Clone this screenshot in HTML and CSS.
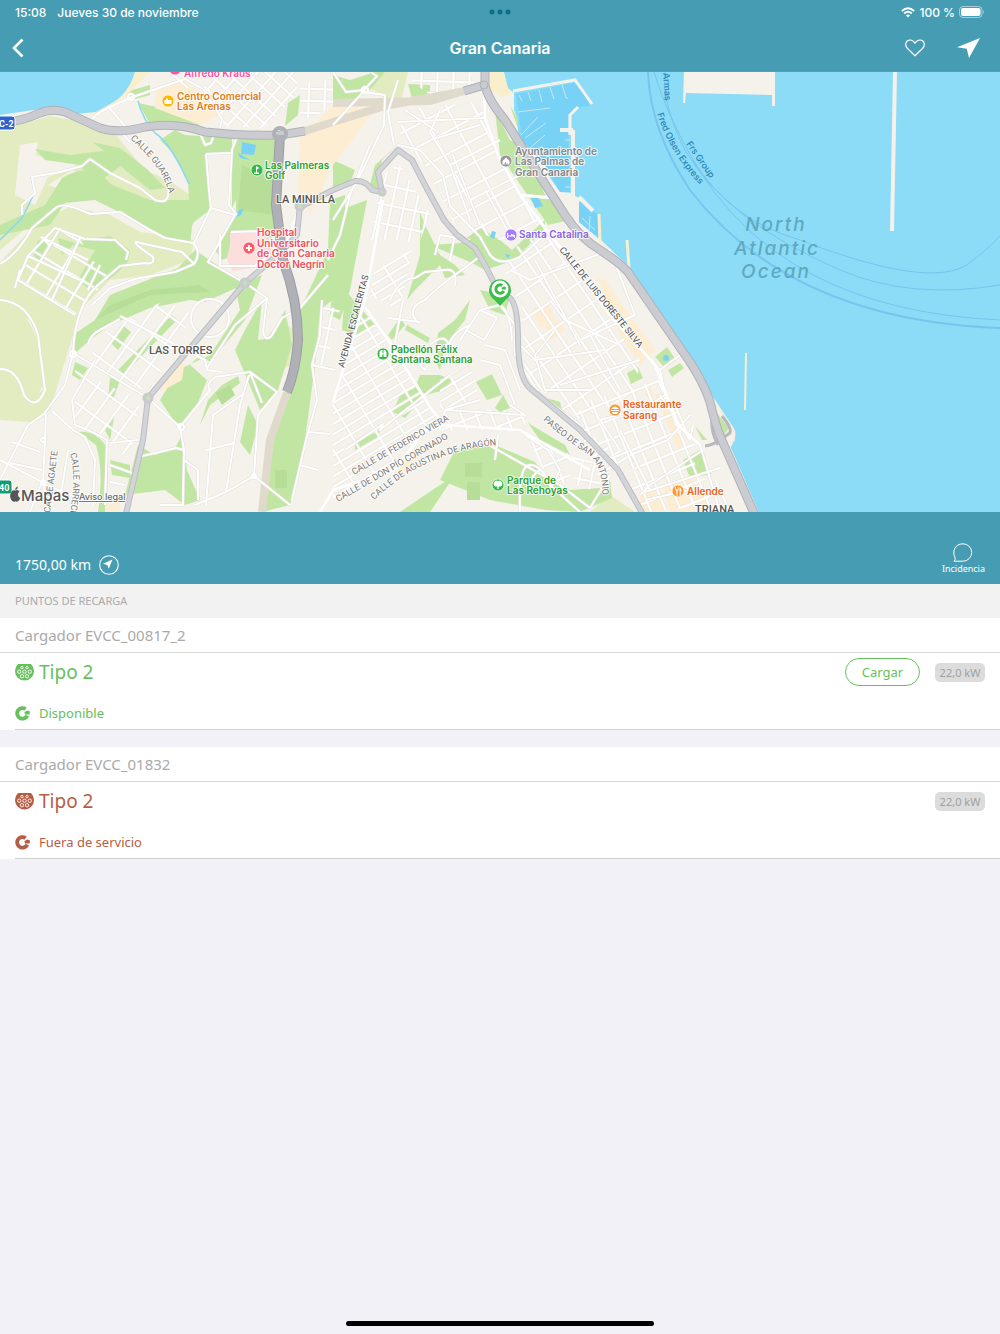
FILE: index.html
```html
<!DOCTYPE html>
<html lang="es">
<head>
<meta charset="utf-8">
<meta name="viewport" content="width=device-width, initial-scale=1">
<title>Gran Canaria</title>
<link rel="stylesheet" href="styles.css">
</head>
<body>
<svg class="sprite" aria-hidden="true">
  <symbol id="type2" viewBox="0 0 19 17">
    <path fill="currentColor" d="M3 0H16Q19 3 19 7A9.500 9.500 0 0 1 0 7Q0 3 3 0Z"/>
    <g fill="none" stroke="#fff" stroke-width=".9"><circle cx="7" cy="3.600" r="1.200"/><circle cx="12" cy="3.600" r="1.200"/><circle cx="4.200" cy="7.700" r="1.700"/><circle cx="9.500" cy="7.700" r="1.700"/><circle cx="14.800" cy="7.700" r="1.700"/><circle cx="7" cy="12.200" r="1.700"/><circle cx="12" cy="12.200" r="1.700"/></g>
  </symbol>
  <symbol id="plug" viewBox="0 0 15 15">
    <path fill="none" stroke="currentColor" stroke-width="3.800" d="M10.600 3.100A5.300 5.300 0 1 0 12.300 9.600"/>
    <path fill="currentColor" d="M9.400 6L12.600 4.600L14.800 5.200V8.400H10Z"/>
  </symbol>
</svg>

<header class="topbar">
  <div class="status">
    <div class="status-left"><span>15:08</span><span>Jueves 30 de noviembre</span></div>
    <svg class="dots" width="22" height="6" viewBox="0 0 22 6" aria-hidden="true"><circle cx="3" cy="3" r="2.500"/><circle cx="11" cy="3" r="2.500"/><circle cx="19" cy="3" r="2.500"/></svg>
    <div class="status-right">
      <svg width="14" height="11" viewBox="0 0 14 11" aria-hidden="true"><g fill="none" stroke="#fff" stroke-width="1.800"><path d="M.8 4Q7-1.600 13.200 4"/><path d="M3.200 6.500Q7 3.100 10.800 6.500"/></g><path fill="#fff" d="M7 10.500L4.900 8.300Q7 6.600 9.100 8.300Z"/></svg>
      <span>100 %</span>
      <svg width="26" height="12" viewBox="0 0 26 12" aria-hidden="true"><rect x=".5" y=".5" width="22.500" height="11" rx="3.500" fill="none" stroke="#fff" opacity=".5"/><rect x="2" y="2" width="19.500" height="8" rx="2" fill="#fff"/><path d="M24.300 4Q26 6 24.300 8Z" fill="#fff" opacity=".6"/></svg>
    </div>
  </div>
  <nav class="nav">
    <button class="icon-btn nav-back" aria-label="Atrás"><svg width="12" height="20" viewBox="0 0 12 20"><path d="M10.500 1.500L2 10L10.500 18.500" fill="none" stroke="#fff" stroke-width="2.600"/></svg></button>
    <h1>Gran Canaria</h1>
    <div class="nav-actions">
      <button class="icon-btn" aria-label="Favorito"><svg width="20" height="18" viewBox="0 0 20 18"><path d="M10 16.800L2.500 9.500C-.8 6 .8 1 5 1Q8.200 1 10 4.200Q11.800 1 15 1C19.200 1 20.800 6 17.500 9.500Z" fill="none" stroke="#fff" stroke-width="1.200" stroke-linejoin="round"/></svg></button>
      <button class="icon-btn" aria-label="Cómo llegar"><svg width="23" height="20" viewBox="0 0 23 20"><path d="M23 0L12 20L9.800 10.800L0 9.200Z" fill="#fff"/></svg></button>
    </div>
  </nav>
</header>

<main>
<svg class="map" viewBox="0 72 1000 440" role="img" aria-label="Mapa de Las Palmas de Gran Canaria">
  <defs>
    <pattern id="gNorth" width="13" height="13" patternUnits="userSpaceOnUse" patternTransform="rotate(42)"><path class="pc" d="M0 6H13M6 0V13"/><path class="pw" d="M0 6H13M6 0V13"/></pattern>
    <pattern id="gSquare" width="16" height="12" patternUnits="userSpaceOnUse" patternTransform="rotate(2)"><path class="pc" d="M0 6H16M8 0V12"/><path class="pw" d="M0 6H16M8 0V12"/></pattern>
    <pattern id="gMid" width="24" height="20" patternUnits="userSpaceOnUse" patternTransform="rotate(-28)"><path class="pc" d="M0 6H24M8 0V20"/><path class="pw" d="M0 6H24M8 0V20"/></pattern>
    <pattern id="gSlant" width="23" height="9" patternUnits="userSpaceOnUse" patternTransform="rotate(-31)"><path class="pc" d="M0 4H23M8 0V9"/><path class="pw" d="M0 4H23M8 0V9"/></pattern>
    <pattern id="gEast" width="15" height="24" patternUnits="userSpaceOnUse" patternTransform="rotate(-34)"><path class="pc" d="M0 6H15M6 0V24"/><path class="pw" d="M0 6H15M6 0V24"/></pattern>
    <pattern id="gTriana" width="14" height="18" patternUnits="userSpaceOnUse" patternTransform="rotate(-22)"><path class="pc" d="M0 6H14M6 0V18"/><path class="pw" d="M0 6H14M6 0V18"/></pattern>
    <pattern id="gWest" width="23" height="16" patternUnits="userSpaceOnUse" patternTransform="rotate(31)"><path class="pc" d="M0 6H23M8 0V16"/><path class="pw" d="M0 6H23M8 0V16"/></pattern>
    <pattern id="gTorres" width="15" height="25" patternUnits="userSpaceOnUse" patternTransform="rotate(36)"><path class="pc" d="M0 6H15M6 0V25"/><path class="pw" d="M0 6H15M6 0V25"/></pattern>
    <pattern id="gSteep" width="12" height="19" patternUnits="userSpaceOnUse" patternTransform="rotate(12)"><path class="pc" d="M0 6H12M6 0V19"/><path class="pw" d="M0 6H12M6 0V19"/></pattern>
    <g id="streets">
      <path d="M92 119Q97 113 110 107L130 98L185 79L203 89L222 119L220 128M108 106L128 130M120 131L130 142M200 133L205 145L211 143L215 132M170 72L188 88M238 134L232 150L229 205L237 215M206 154L232 153M206 154L209 190L211 208L194 243"/>
      <path d="M22 215L22 205L35 193L32 177L60 172L82 166L90 159L110 173L140 188L155 200Q166 204 168 196L169 187"/>
      <path d="M0 264Q18 254 32 228L57 207Q65 202 90 214L120 212L150 230L165 238L193 243Q202 252 194 264L182 252L140 243Q132 240 138 246L153 257Q155 265 145 263L120 266L98 285Q75 305 73 353"/>
      <path d="M194 264L175 272L135 279L110 288L92 305"/>
      <path d="M211 208L235 215L208 262L245 283L267 298L263 332Q266 343 272 335L282 318L300 308L328 275M220 235V266H255L270 255M231 232L268 231"/>
      <path d="M18 280L28 256L55 228L85 239L115 240L128 252L126 260M18 280L75 315M28 256L80 280M43 238L88 260M20 270L15 288M43 238L50 246M60 228L40 262M80 238L52 300M100 265L88 290"/>
      <path d="M0 300Q28 302 38 335L45 390Q36 412 24 395Q17 368 0 369M73 353L65 385L44 414L28 425L10 460L0 480M46 414L45 440L43 484L48 505M52 411L73 430L85 437L95 460L93 505M0 460L42 482L30 512M12 442L40 452M10 463L42 470M43 484L72 495M68 450L60 500"/>
      <path d="M73 353L148 398L180 427L210 390Q205 385 215 377L250 372L277 392L258 415L254 476L290 505M180 427L184 450L183 505L160 505M249 375L240 405L226 492L195 505M243 394L213 415L206 505M234 443L206 450M226 492L254 476M250 372L262 403M138 457L176 448L184 450M184 460L198 470L198 500"/>
      <path d="M88 345Q90 335 100 330L120 319M120 316L205 360L207 370L222 372M207 368L235 325L267 298M95 360L72 400L75 425Q90 430 107 440L105 505M110 443L138 440M110 465L132 473M110 482L125 485"/>
      <path class="wide" d="M383 200L365 300L333 402M300 205L288 240"/>
      <path d="M328 260L340 235L350 195L370 145M322 300L320 335L312 365L317 400L306 440L292 500M312 365L335 370M308 432L330 434M300 465L318 470M333 72L346 92L364 90L377 76L372 73M364 92L385 95L384 125L358 180L333 220M365 90L333 125M398 80L388 112L394 145"/>
      <path class="wide" d="M484 88L485 118L498 155L520 195L545 228L574 265L610 315L655 365L678 425L700 445M520 195L553 198"/>
      <path d="M398 145L420 150L443 175L450 206L480 237L490 255Q500 267 520 257L550 230M440 110L430 132L450 165L470 220M405 110L435 130M398 122L485 118M430 140L480 125M450 165L500 140M470 200L520 175M453 155L480 225"/>
      <path class="wide" d="M365 307L390 343L432 410L445 425M320 512L333 490L395 470L425 430L445 425L520 430L590 470"/>
      <path d="M345 450L383 424L380 430L450 375M418 323Q405 308 425 300Q440 285 455 275L478 258M430 345Q447 330 450 350M450 350Q447 335 470 325L480 310L500 305Q510 310 512 340M460 340L480 310L497 318L484 340L466 330M500 305L515 325L515 355L540 395L580 425M485 345L505 350L520 390M480 360L500 365L515 405"/>
      <path d="M400 345L425 370L440 345M390 300Q400 278 415 278L425 272L445 270Q458 268 455 285M388 318L420 322M403 300L395 343M435 255L440 235L470 240M455 235L450 260M485 190L510 235"/>
      <path d="M480 440L560 485L590 508L610 475M498 435L495 460M525 435L548 450L560 470L550 490M520 512Q518 465 530 465T550 485L580 512M530 490Q530 475 540 470M445 410L525 415M440 430L445 410L480 400M510 405L525 415"/>
      <path d="M555 330L535 355L545 390L590 390M550 300L565 320L620 345M535 260L580 345M510 270L530 280L610 250L635 315L580 340M520 345L535 360L605 350M590 335L620 390M560 385L640 360"/>
      <path d="M650 358L660 370L665 395L645 408L600 420L620 450M660 370L680 355M660 395L690 440L693 425M703 450L650 485L640 495M690 415L668 440L630 455M620 430L650 490M675 405L690 440M700 445L720 512M645 492L720 468M645 500L690 490M715 480L730 512"/>
      <circle cx="210" cy="318" r="19"/><circle cx="73" cy="354" r="3"/><circle cx="181" cy="427" r="3"/><circle cx="131" cy="97" r="3"/><circle cx="365" cy="90" r="3"/><circle cx="43" cy="440" r="2"/><circle cx="43" cy="482" r="2"/><circle cx="254" cy="476" r="2"/>
    </g>
    <g id="mains">
      <path d="M245 283L148 398L143 440L125 518M245 283L274 258M300 205L297 235L283 250M300 207L333 190L355 181Q366 180 372 190L382 192M382 192L378 172L398 150L412 160L425 185L444 220L457 235L475 248L485 265L495 285L510 298Q518 305 518 340Q518 380 532 390L580 430L618 470L645 518"/>
    </g>
    <g id="highway">
      <path d="M-4 124Q20 122 40 113Q52 108 65 112L100 128Q118 134 145 127Q175 122 205 132Q240 136 280 135L305 131"/>
      <path d="M485 66V85L464 91M485 85Q488 100 505 120L545 184L565 215Q580 238 600 250Q620 263 628 272L690 362Q708 390 712 410Q717 430 724 445L757 520"/>
    </g>
    <path id="guarelaPath" d="M130 139Q165 168 170 198"/>
    <path id="antonioPath" d="M543 420Q566 440 586 453Q605 464 602 506"/>
    <path id="arrecifePath" d="M70 454Q78 478 67 528"/>
    <path id="aragonPath" d="M374 500Q430 446 514 444"/>
    <path id="fredPath" d="M657 114Q674 164 716 200"/>
  </defs>

  <rect class="land" y="72" width="1000" height="440"/>

  <!-- hillsides -->
  <g class="olive">
    <path d="M0 130L50 116L95 124L115 134L145 170L168 180L190 195L194 225L170 215L130 208L100 200L60 200L30 225L0 250Z"/>
    <path d="M0 262L40 220L70 207L110 215L140 232L195 240L190 260L150 275L110 280L80 310L70 345L50 410L30 422L0 420ZM0 312L30 320L40 345L43 390L30 400L15 370L0 365Z" fill-rule="evenodd"/>
    <path d="M0 308L28 320L38 340L43 385L32 405L20 385L10 372L0 368Z"/>
    <path d="M372 72H408L400 105L385 98L370 88ZM245 360L265 340L280 320L295 330L290 365L275 375L248 370ZM610 495L635 512H590Z"/>
  </g>
  <path class="land" d="M20 145L38 142L36 155L60 160L85 157L70 170L48 177L35 205L15 195ZM48 185L72 170L110 185L125 200L80 196ZM62 107L92 122L118 130L110 104L95 112Z"/>
  <path class="land" d="M110 107L138 101L155 133L178 150L189 184L168 178L148 150L122 131Z"/>
  <g class="green">
    <path d="M185 135L232 138V152L206 154L210 210L190 225L188 180L172 152L160 140L175 130ZM138 103L180 112L200 122L198 128L150 124Z"/>
    <path d="M236 138H275L276 235L235 255L222 260L215 250L236 212ZM240 134L236 200L232 208V150Z"/>
    <path d="M125 92L150 85L150 95L135 99ZM288 103L300 95L298 115L285 126ZM92 142L120 148L148 170L165 188L150 190L125 170L110 155ZM35 149L70 155L110 150L122 165L95 185L80 165L45 160Z"/>
    <path d="M62 178Q90 160 112 185L150 200L195 200L190 245L160 235L125 215L95 200L65 203L50 225L0 235V225L45 205Z"/>
    <path d="M85 240L110 236L130 250L128 262L115 275L90 290L78 280L95 250L72 245ZM38 240L50 243L40 262L34 255ZM58 238L75 243L62 255Z"/>
    <path d="M195 250L245 284L205 302L190 300L150 308L110 325L90 340L73 355V335L95 320L110 295L135 285L178 268Z"/>
    <path d="M262 275L245 320L210 362L200 355L190 365L207 380L195 410L180 430L160 400L178 370L210 355L240 310L235 285ZM283 262L300 310L328 250L330 200L345 195V290L320 310L315 365L305 440L290 505L262 512L275 430L300 340ZM245 330L262 300L258 340L270 338L285 310L292 345L278 390L260 410L235 350Z"/>
    <path d="M182 435L187 470L200 500L185 505L165 490L125 495L138 445L155 455L175 448ZM78 432Q98 430 108 450L107 512H98Q104 470 96 445ZM105 430L115 412L110 440ZM110 460L130 465L130 478L112 475Z"/>
    <path d="M122 325L131 332L118 350L110 342ZM172 315L177 320L123 375L118 370ZM75 362L88 368L80 380L72 375ZM110 378L120 380L113 400L108 398ZM222 385L238 376L240 383L210 405L200 425L208 400ZM248 405L258 425L250 455L240 442Z"/>
    <path d="M333 75L350 80L375 72H385L370 90L333 115ZM408 84L430 85V100L412 98ZM333 160L355 170L350 183L333 188ZM398 145L382 160L378 190L370 185L375 165ZM495 110L510 140L525 145L545 195L570 220L548 225L500 155Z"/>
    <path d="M340 210L367 200L350 290L340 320L330 315ZM345 290L375 325L355 335L342 330ZM420 212L425 225L440 255L455 265L465 275L445 278L440 265L415 290L407 300L420 255ZM430 245L460 243L480 228L500 240L512 250L545 220L545 228L515 260L485 270L470 262ZM400 318L405 325L392 340L388 335ZM407 325L430 338L428 343L405 330ZM440 375L452 380L445 390L425 395L405 418L393 412L400 395L415 388L420 375ZM480 290L510 296L505 315L490 310ZM470 300L465 320L445 345L440 370L435 360L438 333L455 320Z"/>
    <path d="M476 382L492 374L502 395L487 400ZM355 442L380 430L378 437L355 450ZM495 408L503 395L510 408L500 412ZM528 423L565 445L570 455L540 440ZM543 397L560 402L563 415ZM455 450L495 445L535 462L545 475L570 490L600 488L605 495L610 480L612 498L580 512L545 510L490 500L440 480ZM455 475L430 512H400L425 495ZM510 105L530 140L525 150Z"/>
    <path d="M655 357L667 347L676 360L665 368ZM627 373L638 367L643 378L631 384ZM668 370L680 363L684 368L672 377ZM683 460L700 450L711 474L690 478ZM695 426L707 440L702 440Z"/>
  </g>
  <g class="green-dark">
    <path d="M242 165L275 180V215L238 210ZM95 320L150 295L210 292L200 285L150 290L110 305ZM215 393L230 385L235 395L222 405ZM465 463H482V477H465ZM467 482H480V500H467ZM275 470H287V488H275Z"/>
  </g>
  <g class="shops">
    <path d="M155 90L185 80L220 115L200 125L155 108ZM300 138L333 105L375 110L333 165L310 215L298 190ZM165 373L185 360L182 380L160 392ZM533 308L548 303L555 320L540 328ZM545 325L560 320L565 330L550 340ZM597 278L605 280L655 350L640 365L620 335ZM655 395L665 392L685 440L678 450ZM645 395L650 385L655 400ZM663 488L690 475L715 512H670ZM640 495L660 488L665 512H640ZM400 465L415 455L415 463L400 475ZM105 500H120V512H105Z"/>
  </g>
  <path class="hospital" d="M230 232H268L274 265L232 271L227 258L230 245Z"/>

  <!-- city blocks -->
  <path fill="url(#gNorth)" d="M200 72H300L294 98L262 128L225 126L205 90Z"/>
  <path fill="url(#gSquare)" d="M300 85L333 78V105L312 118H300ZM412 72H470L475 85L435 98L412 82Z"/>
  <path fill="url(#gMid)" d="M403 110L480 102L497 155L540 220L500 240L455 225L425 165L400 140Z"/>
  <path fill="url(#gSteep)" d="M385 172L400 165L430 215L418 245L402 240L370 240L378 200ZM325 305L340 310L325 370L313 365Z"/>
  <path fill="url(#gSlant)" d="M365 310L425 400L440 420L393 462L333 500V400L350 340ZM375 270L412 250L400 310L370 295ZM440 380L470 365L480 400L440 410ZM580 430L640 460L600 480Z"/>
  <path fill="url(#gEast)" d="M510 250L545 232L640 360L635 395L575 420L525 375L522 305L505 280Z"/>
  <path fill="url(#gTriana)" d="M590 400L660 380L695 445L680 465L612 470L570 420ZM625 475L690 455L720 505L645 512Z"/>
  <path fill="url(#gWest)" d="M38 238L60 228L80 238L90 260L115 270L75 315L18 280Z"/>
  <path fill="url(#gTorres)" d="M108 330L165 300L192 315L150 392L85 365ZM75 370L140 400L130 460L95 435L75 420Z"/>
  <path fill="url(#gTriana)" d="M445 410H525V430H440ZM525 432L570 455L570 485L548 478Z"/>
  <path fill="url(#gSteep)" d="M572 456L602 465L600 492L575 485Z"/>

  <!-- water -->
  <g class="sand">
    <path d="M135 72H150L130 92L108 110L85 116L95 110ZM489 72H506L512 92L502 98L490 90Z"/>
  </g>
  <path class="water" d="M0 72H135Q128 95 110 104L96 112L75 114L55 109Q40 108 0 115Z"/>
  <path class="water" d="M504 72H1000V512H757L740 475L729 447L735 440V432L710 393L680 350L630 272L627 265L601 240L588 228L579 222V201L573 193L560 192L550 178L545 165L530 150L518 135V120L514 110V93L508 88Z"/>
  <path class="marina" d="M516 94L578 82L590 106L575 108L568 115L570 192L560 192L545 165L522 140ZM579 201L598 215V238L579 222Z"/>
  <g class="pool"><path d="M242 142L256 145L254 155L241 154ZM238 153L250 160L240 158ZM238 211L244 208L241 215L236 217ZM531 198L538 197L543 206L535 208ZM492 231L496 232L494 239L490 237ZM505 254L510 255L508 259Z"/><circle cx="666" cy="358" r="3"/></g>
  <g class="creek"><path d="M138 101Q143 120 155 133Q170 142 189 184M31 177L35 192L22 218L0 240"/></g>
  <g class="pier">
    <path class="p3" d="M513 91L575 80L592 104M578 107L570 115V135"/>
    <path class="p5" d="M573 130V198L580 200M560 130H573M579 197L593 211"/>
    <path class="p1" d="M519 95L522 101M528 92L531 101M539 90L542 102M550 87L554 99M562 84L566 98H568M518 112L550 108M521 135L538 117M525 138L546 123M530 148L545 135M565 140H572M565 151H572M565 163H572M565 175H572M565 187H572M582 218L595 230M590 216L589 232"/>
    <path class="p5" d="M895 72L892 231"/>
    <path d="M684 72H775V106H772V95L686 93L685 103H683Z"/>
  </g>
  <path class="sand-pier" d="M599 214L600 242M627 240L629 268"/>
  <path class="sand-bar" d="M746 353L745 410"/>
  <path class="coast" d="M600 242L628 268L680 350L732 428Q737 435 729 447L757 512"/>
  <path class="land" d="M700 384L733 430Q736 436 728 450Z"/>
  <path class="green" d="M716 412L729 428L722 438Z"/>
  <g class="ferry"><path d="M648 72Q650 130 690 190Q790 320 1000 328"/><path class="thin" d="M654 72Q665 110 693 160Q730 220 800 240Q930 290 968 264Q980 256 1000 236M665 72Q662 105 685 150Q725 220 840 270Q910 300 1000 285M693 160Q780 310 1000 320"/></g>

  <!-- roads -->
  <g class="tunnel"><path d="M305 131L333 122L385 106L460 92M333 103L430 101L464 91M287 393L270 440L262 512"/></g>
  <use href="#streets" class="street-edge"/><use href="#streets" class="street"/>
  <use href="#mains" class="main-edge"/><use href="#mains" class="main"/>
  <g class="hub"><circle cx="245" cy="283" r="4"/><circle cx="148" cy="398" r="4"/><circle cx="300" cy="206" r="4"/><circle cx="382" cy="192" r="3"/></g>
  <path class="ramp" d="M714 405Q708 428 718 445M717 442L730 433Q732 428 722 416M705 446Q715 445 722 437"/>
  <use href="#highway" class="hw-edge"/><use href="#highway" class="hw"/>
  <g class="roundabout"><circle cx="484" cy="85" r="4"/></g>
  <path class="trunk-edge" d="M280 135L276 205L283 260Q298 300 298 340Q296 370 287 392"/>
  <path class="trunk" d="M280 135L276 205L283 260Q298 300 298 340Q296 370 287 392"/>
  <circle class="ring" cx="280" cy="134" r="6"/>

  <!-- street names -->
  <g class="road-name">
    <text><textPath href="#guarelaPath">CALLE GUARELA</textPath></text>
    <text class="strong" transform="translate(344 368) rotate(-75)">AVENIDA ESCALERITAS</text>
    <text class="strong" transform="translate(559 250) rotate(51)">CALLE DE LUIS DORESTE SILVA</text>
    <text transform="translate(354 475) rotate(-30)">CALLE DE FEDERICO VIERA</text>
    <text transform="translate(338 502) rotate(-30)">CALLE DE DON PÍO CORONADO</text>
    <text><textPath href="#aragonPath">CALLE DE AGUSTINA DE ARAGÓN</textPath></text>
    <text><textPath href="#antonioPath">PASEO DE SAN ANTONIO</textPath></text>
    <text transform="translate(50 513) rotate(-83)">CALLE AGAETE</text>
    <text><textPath href="#arrecifePath">CALLE ARRECIFE</textPath></text>
  </g>
  <g class="ferry-name"><text transform="translate(663 73) rotate(86)">Armas</text><text><textPath href="#fredPath">Fred Olsen Express</textPath></text><text transform="translate(686 144) rotate(55)">Frs Group</text></g>

  <g class="district"><text x="276" y="203">LA MINILLA</text><text x="149" y="354">LAS TORRES</text><text x="695" y="513">TRIANA</text></g>
  <g class="ocean"><text x="776" y="231">North</text><text x="777" y="255">Atlantic</text><text x="776" y="278">Ocean</text></g>

  <!-- places -->
  <g class="poi">
    <g fill="#ff4f9e"><circle cx="175" cy="69" r="6"/><text x="184" y="77">Alfredo Kraus</text></g>
    <g fill="#dd7c22"><circle cx="168" cy="101" r="6" fill="#ffb800"/><text x="177" y="100">Centro Comercial</text><text x="177" y="110">Las Arenas</text></g>
    <g fill="#2da02b"><circle cx="257" cy="170" r="6" fill="#34b944"/><text x="265" y="169">Las Palmeras</text><text x="265" y="179">Golf</text></g>
    <g fill="#f04f5c"><circle cx="249" cy="248" r="6" fill="#ff5b68"/><text x="257" y="236">Hospital</text><text x="257" y="247">Universitario</text><text x="257" y="257">de Gran Canaria</text><text x="257" y="268">Doctor Negrín</text></g>
    <g fill="#858585"><circle cx="506" cy="161" r="6" fill="#999"/><text x="515" y="155">Ayuntamiento de</text><text x="515" y="165">Las Palmas de</text><text x="515" y="176">Gran Canaria</text></g>
    <g fill="#8b5fe6"><circle cx="511" cy="235" r="6" fill="#a27bff"/><text x="519" y="238">Santa Catalina</text></g>
    <g fill="#2da02b"><circle cx="383" cy="354" r="6" fill="#34b944"/><text x="391" y="353">Pabellón Félix</text><text x="391" y="363">Santana Santana</text></g>
    <g fill="#2da02b"><circle cx="498" cy="485" r="6" fill="#34b944"/><text x="507" y="484">Parque de</text><text x="507" y="494">Las Rehoyas</text></g>
    <g fill="#ec641a"><circle cx="615" cy="410" r="6" fill="#ff9836"/><text x="623" y="408">Restaurante</text><text x="623" y="419">Sarang</text></g>
    <g fill="#ec641a"><circle cx="678" cy="491" r="6" fill="#ff9836"/><text x="687" y="495">Allende</text></g>
  </g>
  <g class="glyph">
    <path d="M164.500 100H166V98.500H168V100H171.500V104H164.500ZM248 245H250V247H252V249H250V251H248V249H246V247H248ZM256 166L259.500 168L257 169.500V172.500H259V174H254V172.500H256Z"/>
    <path d="M502.500 164.500V161L506 157.500L509.500 161V164.500ZM507 233V238H508.200V236.500H514V238H515V235L511 234V235.500H508.200V233ZM498 481A2.800 2.800 0 0 1 500.500 486.500H498.700V489H497.300V486.500H495.500A2.800 2.800 0 0 1 498 481Z"/>
    <path d="M611 409Q615 404 619 409ZM611 410H619V411H611ZM612 412H618Q618 414 615 414T612 412ZM675 487V490L676.500 491V496H677.500V491L678.500 490V487H677.800V489.500H675.800V487ZM679.500 487Q681.500 488 681.500 491H680.700V496H679.700Z"/>
    <path d="M379.500 352L381 350H382.500V353H383.500V350H385L386.500 352V357H383.700V354.500H382.300V357H379.500Z"/>
  </g>
  <path d="M504 164H508M505.500 162V164" stroke="#999" stroke-width=".8"/>

  <!-- road shields -->
  <g class="shield"><rect x="-8" y="116" width="23" height="14" rx="3" fill="#2b62cc"/><text x="-1" y="127">C-2</text><rect x="-8" y="480" width="20" height="14" rx="3" fill="#0b9e75"/><text x="-1" y="491">40</text></g>

  <g class="brand"><path d="M15.300 490.500Q17.500 489.300 19.500 491.500Q17.500 493 18 495.200T20.300 498Q18 503 15.500 501.300Q12.500 503 10.800 499Q9 494 12 491Q13.500 490 15.300 490.500ZM15.300 490Q15 487.500 17.800 486.500Q18 489 15.300 490Z"/><text x="21" y="501">Mapas</text></g>
  <a href="#aviso-legal"><text class="legal" x="79" y="500">Aviso legal</text></a>

  <!-- charging station pin -->
  <g><path fill="#3cbe4b" d="M500 306L494 299.500A11 11 0 1 1 506 299.500Z"/><circle cx="500" cy="289" r="8.500" fill="#fff"/><path fill="none" stroke="#3cbe4b" stroke-width="3" d="M502.300 285.500A4.200 4.200 0 1 0 503.800 291"/><path fill="#3cbe4b" d="M501.500 287.800L504 286.600L505.800 287V289.600H502Z"/></g>
</svg>

<section class="summary">
  <div class="distance"><span>1750,00 km</span>
    <svg width="20" height="20" viewBox="0 0 20 20" aria-hidden="true"><circle cx="10" cy="10" r="9.300" fill="none" stroke="#fff" stroke-width="1.100"/><path d="M13.500 4.500L9.800 13.800L8.300 10L4 8.800Z" fill="#fff"/></svg>
  </div>
  <button class="incident"><svg width="20" height="19" viewBox="0 0 20 19" aria-hidden="true"><path d="M1 18.200Q2.800 16.500 2 14.500C-1 9 1.500 .8 10 .8A8.700 8.700 0 0 1 10 18.200Z" fill="none" stroke="#fff" stroke-width="1"/></svg>Incidencia</button>
</section>

<h2 class="section-title">PUNTOS DE RECARGA</h2>

<article class="charger available">
  <h3>Cargador EVCC_00817_2</h3>
  <div class="charger-body">
    <div class="connector"><svg width="19" height="17" aria-hidden="true"><use href="#type2"/></svg><span class="type">Tipo 2</span><button class="charge">Cargar</button><span class="power">22,0 kW</span></div>
    <div class="state"><svg width="15" height="15" aria-hidden="true"><use href="#plug"/></svg><span>Disponible</span></div>
  </div>
</article>
<article class="charger out">
  <h3>Cargador EVCC_01832</h3>
  <div class="charger-body">
    <div class="connector"><svg width="19" height="17" aria-hidden="true"><use href="#type2"/></svg><span class="type">Tipo 2</span><span class="power">22,0 kW</span></div>
    <div class="state"><svg width="15" height="15" aria-hidden="true"><use href="#plug"/></svg><span>Fuera de servicio</span></div>
  </div>
</article>
</main>
<div class="home-indicator"></div>
</body>
</html>
```
FILE: styles.css
```css
* { box-sizing: border-box; }
body {
  margin: 0;
  min-height: 100vh;
  display: flex;
  flex-direction: column;
  background: #f2f1f7;
  font-family: "Noto Sans", "Open Sans", sans-serif;
}
button { border: 0; padding: 0; background: none; font: inherit; color: inherit; cursor: pointer; }
h1, h2, h3 { margin: 0; font-weight: 400; }
svg { display: block; flex: none; }
.sprite { position: absolute; width: 0; height: 0; }

/* Top bar */
.topbar { background: #469db3; color: #fff; font-family: Inter, sans-serif; border-bottom: 1px solid #5a9dab; }
.status, .nav { display: grid; grid-template-columns: 1fr auto 1fr; align-items: center; }
.status { height: 24px; padding: 0 15px; font-size: 12px; font-weight: 500; }
.status-left { display: flex; gap: 11px; }
.status-right { display: flex; gap: 4px; align-items: center; justify-content: flex-end; }
.dots { fill: #0b6f87; }
.nav { height: 47px; padding: 0 20px; }
.nav h1 { font-size: 16px; font-weight: 600; }
.nav-back { justify-self: start; margin-left: -8px; }
.nav-actions { display: flex; gap: 32px; justify-content: flex-end; align-items: center; }

/* Map */
.map { width: 100%; height: auto; }
.land { fill: #f5f2eb; }
.olive { fill: #e3ebc1; }
.green { fill: #c1e6a4; }
.green-dark { fill: #b7de98; }
.shops { fill: #fdedd2; }
.hospital { fill: #fcdedd; }
.sand { fill: #faefcd; }
.water { fill: #8cdcf7; }
.marina { fill: #78d2f6; }
.pool { fill: #79d2f5; }
.creek { fill: none; stroke: #8bd8f3; stroke-width: 1.5; }
.pc { fill: none; stroke: #e6e3de; stroke-width: 3; }
.pw { fill: none; stroke: #fff; stroke-width: 2; }
.pier { fill: #f5f2eb; stroke: none; }
.p1, .p3, .p5 { fill: none; stroke: #f5f2eb; }
.p1 { stroke-width: 1; stroke: #c7e7ee; }
.p3 { stroke-width: 3; }
.p5 { stroke-width: 4; }
.sand-pier, .sand-bar { fill: none; stroke: #f7f0cf; stroke-width: 3; }
.sand-bar { stroke-width: 2; }
.coast { fill: none; stroke: #f4efe2; stroke-width: 3; }
.ferry { fill: none; stroke: #77c5ef; stroke-width: 2; }
.thin { stroke-width: 1; }
.tunnel { fill: none; stroke: #e0dacd; stroke-width: 8; }
.street, .street-edge, .main, .main-edge, .hw, .hw-edge { fill: none; stroke-linejoin: round; }
.street-edge { stroke: #e2e0db; stroke-width: 3; }
.street { stroke: #fff; stroke-width: 2; }
.wide { stroke-width: 3; }
.main-edge { stroke: #bcbdc3; stroke-width: 6; }
.main { stroke: #d3d4d8; stroke-width: 4; }
.hub { fill: #c9dfb9; stroke: #c9cacf; stroke-width: 3; }
.roundabout { fill: #cbccd1; stroke: #b0b1b7; stroke-width: 1; }
.ramp { fill: none; stroke: #b8b9bf; stroke-width: 3; }
.hw-edge { stroke: #b0b1b7; stroke-width: 9; }
.hw { stroke: #cbccd1; stroke-width: 7; }
.trunk-edge, .trunk { fill: none; }
.trunk-edge { stroke: #9c9da3; stroke-width: 10; }
.trunk { stroke: #b0b1b7; stroke-width: 8; }
.ring { fill: none; stroke: #b0b1b7; stroke-width: 4; }
.map text { paint-order: stroke; stroke: #fff; stroke-opacity: .8; stroke-width: 2px; stroke-linejoin: round; }
.road-name { fill: #777; font: 400 9px Roboto, sans-serif; }
.strong { fill: #4c4c4c; }
.ferry-name { fill: #2883b6; font: 500 9px Inter, sans-serif; }
.map .ferry-name text, .map .ocean text { stroke: none; }
.district { fill: #555; font: 500 11px Roboto, sans-serif; }
.ocean { fill: #5fa9c1; font: italic 500 19px Inter, sans-serif; letter-spacing: 2px; text-anchor: middle; }
.poi { font: 600 10px Inter, sans-serif; }
.poi circle { stroke: #fff; stroke-width: 1; stroke-opacity: .7; }
.glyph { fill: #fff; }
.map .shield text { fill: #fff; stroke: none; font: 700 9px Roboto, sans-serif; }
.shield rect { stroke: #fff; stroke-width: 1; }
.brand { fill: #55565a; }
.brand text { font: 500 15px Inter, sans-serif; }
.map .legal { fill: #6b6b6b; font: 500 9px Inter, sans-serif; text-decoration: underline; }

/* Distance panel */
.summary {
  display: flex;
  justify-content: space-between;
  align-items: flex-end;
  min-height: 72px;
  padding: 0 15px 9px;
  background: #469db3;
  color: #fff;
}
.distance { display: flex; align-items: center; gap: 8px; font-size: 14px; line-height: 20px; }
.incident { display: flex; flex-direction: column; align-items: center; gap: 1px; font-size: 9px; line-height: 12px; }

/* Charging points */
.section-title { padding: 0 15px; background: #f2f2f2; color: #aaa; font-size: 11px; line-height: 34px; }
.charger { background: #fff; }
.charger + .charger { margin-top: 17px; }
.charger h3 { padding: 0 15px; border-bottom: 1px solid #d8d8d8; color: #aaa; font-size: 15px; line-height: 34px; }
.charger-body { margin-left: 15px; border-bottom: 1px solid #d0d0d0; }
.connector { display: flex; align-items: center; height: 38px; padding-right: 15px; gap: 5px; }
.type { flex: 1; font-size: 19px; }
.state { display: flex; align-items: center; height: 32px; margin-top: 6px; gap: 9px; }
.available { color: #66c15c; }
.out { color: #b75d45; }
.state, .charge { font-size: 13px; }
.charge { width: 75px; height: 28px; margin-right: 10px; border: 1px solid #66c15c; border-radius: 14px; }
.power { width: 50px; border-radius: 5px; background: #dcdcdc; color: #a0a0a0; font-size: 11px; line-height: 19px; text-align: center; }

.home-indicator { width: 308px; height: 5px; margin: auto auto 8px; border-radius: 3px; background: #000; }
```
